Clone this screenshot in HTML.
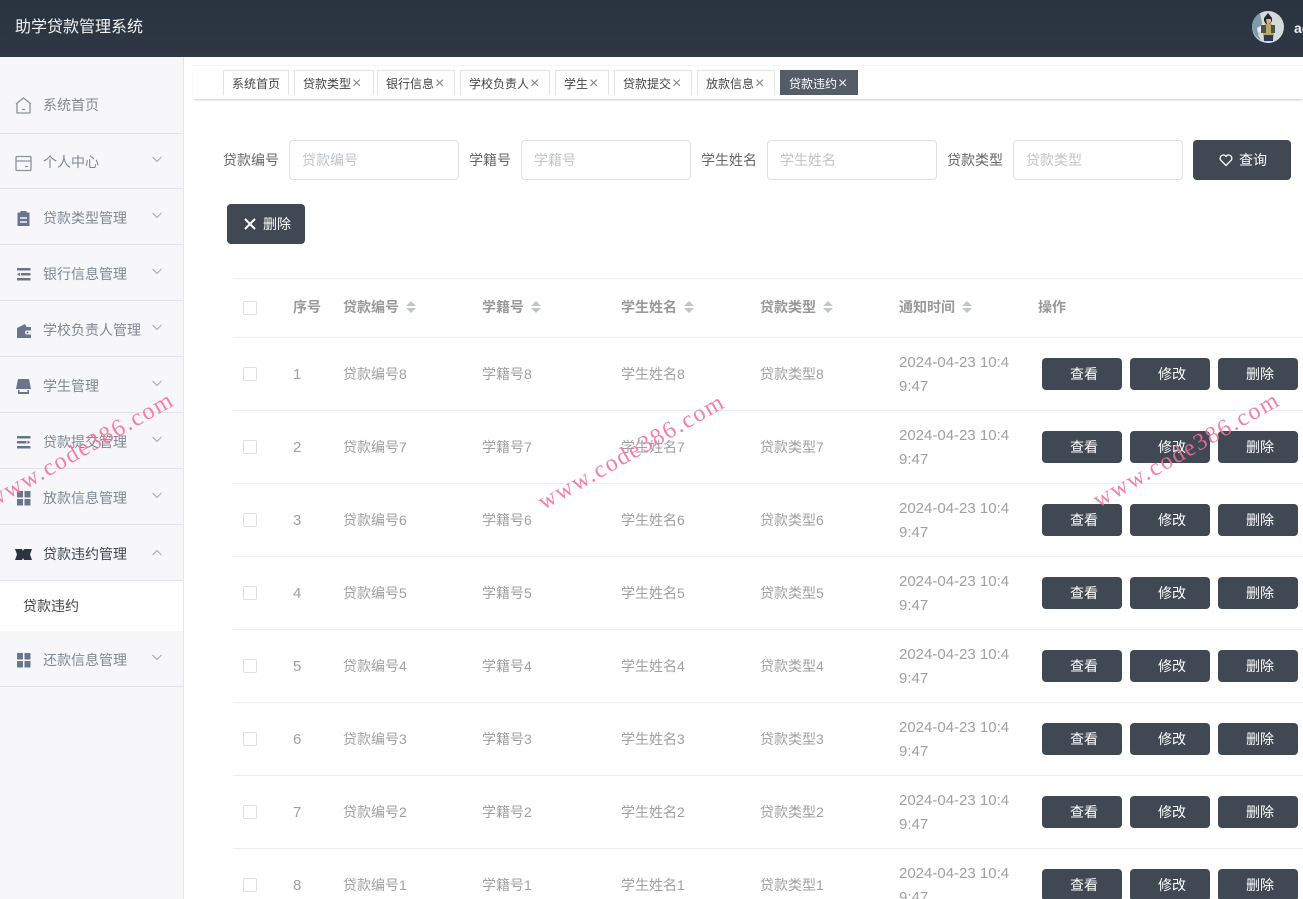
<!DOCTYPE html>
<html lang="zh"><head><meta charset="utf-8"><title>助学贷款管理系统</title>
<style>
html,body{margin:0;padding:0;width:1303px;height:899px;overflow:hidden;background:#fff}
body{position:relative;font-family:"Liberation Sans","Noto Sans CJK SC",sans-serif;font-size:14px;color:#666}
div,span,svg{position:absolute;box-sizing:border-box;white-space:nowrap}
#hd{left:0;top:0;width:1303px;height:57px;background:linear-gradient(180deg,#2a3340,#2e3744)}
#sb{left:0;top:57px;width:184px;height:842px;background:#f7f7f9;border-right:1px solid #e6e6ea}
.m{left:0;width:183px;border-bottom:1px solid #e2e2e6}
.mt{left:43px;line-height:20px;color:#7f8794}
.ic{left:15px;width:17px;height:17px}
.ch{left:152px;width:10px;height:7px}
.tab{top:70px;height:25px;border:1px solid #e3e3e3;border-bottom:none;background:#fff;font-size:12px;line-height:26px;color:#444;padding-left:8px}
.tab i{font-style:normal;color:#888;font-size:16px;line-height:20px;margin-left:1px;font-weight:normal}
.lb{top:150px;line-height:20px;color:#666}
.ip{top:140px;width:170px;height:40px;border:1px solid #dcdfe6;border-radius:4px;padding-left:12px;line-height:38px;color:#c0c4cc;background:#fff}
.btn{background:#3f4853;border-radius:4px;color:#fff;text-align:center}
.hl{left:233px;width:1070px;height:1px;background:#ebeef5}
.r{left:0;width:1303px;height:73px}
.cb{left:243px;width:14px;height:14px;border:1px solid #dcdfe6;border-radius:2px;background:#fff}
.c{line-height:24px;color:#a0a0a0;top:25px}
.n{left:293px;font-size:15px;top:26px}
.d{left:899px;top:14px;font-size:15px}
.th{top:297px;line-height:20px;color:#999;font-weight:bold}
.s{top:301px;width:10px;height:12px}
.b{top:21px;width:80px;height:32px;line-height:32px;background:#3f4853;border-radius:4px;color:#fff;text-align:center;padding-left:4px}
.w{font-family:"Liberation Serif",serif;font-size:24px;letter-spacing:1.7px;color:#f0709a;transform:rotate(-29.5deg);transform-origin:0 50%;line-height:28px;opacity:.88;z-index:9}
</style></head><body>

<div id="hd">
<span style="left:15px;top:17px;line-height:22px;font-size:16px;color:#f2f2f2">助学贷款管理系统</span>
<svg style="left:1252px;top:11px;width:32px;height:32px" viewBox="0 0 32 32">
<circle cx="16" cy="16" r="16" fill="#d5dadb"/><path d="M0 16A16 16 0 0 1 8 2L10 12 6 24 9 29A16 16 0 0 1 0 16Z" fill="#7f9aa8"/>
<path d="M13 13h7l2 11-1 6h-9l-1-6z" fill="#b9a76a"/><path d="M9 14h5v8H9zM19 14h4v8h-4z" fill="#4c5448"/><path d="M12 24h9v6h-9z" fill="#2c3a55"/>
<path d="M12 7l4-5 4 5v3l-2 3h-4l-2-3z" fill="#23262b"/><path d="M14 8h5v3l-2 2h-2z" fill="#d8ad8c"/><path d="M5 17l4-2v5l-3 2z" fill="#eee"/></svg>
<span style="left:1294px;top:17px;line-height:22px;font-size:14px;font-weight:bold;color:#f4f4f4">admin</span>
</div>

<div id="sb"></div>
<div class="m" style="top:57px;height:77px"></div>
<div class="m" style="top:134px;height:55px"></div>
<div class="m" style="top:189px;height:56px"></div>
<div class="m" style="top:245px;height:56px"></div>
<div class="m" style="top:301px;height:56px"></div>
<div class="m" style="top:357px;height:56px"></div>
<div class="m" style="top:413px;height:56px"></div>
<div class="m" style="top:469px;height:56px"></div>
<div class="m" style="top:525px;height:56px"></div>
<div style="left:0;top:581px;width:183px;height:50px;background:#fff"></div>
<div class="m" style="top:631px;height:56px"></div>

<svg class="ic" style="top:97px" viewBox="0 0 17 17" fill="none" stroke="#8b93a1" stroke-width="1.3"><path d="M1 7L8.500 1 16 7M2 6.500V16h13V6.500"/><path d="M7 12.500h3"/></svg>
<span class="mt" style="top:95px">系统首页</span>
<svg class="ic" style="top:155px" viewBox="0 0 17 17" fill="none" stroke="#8b93a1" stroke-width="1.300"><rect x="1" y="1.500" width="15" height="14" rx="1"/><path d="M1 6h15M10 11.500h3"/></svg>
<span class="mt" style="top:152px">个人中心</span>
<svg class="ic" style="top:210px" viewBox="0 0 17 17"><path d="M2.500 2.500h3V1h6v1.500h3V16h-12z" fill="#69758c"/><path d="M5 8h7M5 12h7" stroke="#f6f6f8" stroke-width="1.500"/></svg>
<span class="mt" style="top:208px">贷款类型管理</span>
<svg class="ic" style="top:266px" viewBox="0 0 17 17" fill="#69758c"><path d="M2 2h13.500v2.500H2zM6 7h9.500v2.500H6zM2 12h13.500v2.500H2zM2 8.200L5 6.500V10z"/></svg>
<span class="mt" style="top:264px">银行信息管理</span>
<svg class="ic" style="top:323px" viewBox="0 0 17 17" fill="#69758c"><path d="M2 5l8-4 1.500 3H16v3.500h-4a2 2 0 0 0 0 4h4V15H2z"/><circle cx="12.500" cy="9.500" r="1"/></svg>
<span class="mt" style="top:320px">学校负责人管理</span>
<svg class="ic" style="top:378px" viewBox="0 0 17 17" fill="#69758c"><path d="M3 1h11l2 10H1z"/><path d="M3 12v4h11v-4h-1.500v2h-8v-2z"/></svg>
<span class="mt" style="top:376px">学生管理</span>
<svg class="ic" style="top:434px" viewBox="0 0 17 17" fill="#69758c"><path d="M2 2h13.500v2.500H2zM2 7h9.500v2.500H2zM2 12h13.500v2.500H2zM12.500 6.500l3 1.700-3 1.800z"/></svg>
<span class="mt" style="top:432px">贷款提交管理</span>
<svg class="ic" style="top:490px" viewBox="0 0 17 17" fill="#69758c"><path d="M2 1h6v6.500H2zM9.500 1h6v6.500h-6zM2 9h6v6.500H2zM9.500 9h6v6.500h-6z"/></svg>
<span class="mt" style="top:488px">放款信息管理</span>
<svg class="ic" style="top:546px" viewBox="0 0 17 17" fill="#2b3440"><path d="M0 3h7l1 2 1-2h8l-2 5.500 2 5.500H9l-1-2-1 2H0l2-5.500z"/></svg>
<span class="mt" style="top:544px;color:#3c4450">贷款违约管理</span>
<span style="left:23px;top:596px;line-height:20px;color:#444">贷款违约</span>
<svg class="ic" style="top:652px" viewBox="0 0 17 17" fill="#69758c"><path d="M2 1h6v6.500H2zM9.500 1h6v6.500h-6zM2 9h6v6.500H2zM9.500 9h6v6.500h-6z"/></svg>
<span class="mt" style="top:650px">还款信息管理</span>

<svg class="ch" style="top:156px" viewBox="0 0 10 7" fill="none" stroke="#a3a8b1"><path d="M.5 1L5 5.500 9.500 1"/></svg>
<svg class="ch" style="top:212px" viewBox="0 0 10 7" fill="none" stroke="#a3a8b1"><path d="M.5 1L5 5.500 9.500 1"/></svg>
<svg class="ch" style="top:268px" viewBox="0 0 10 7" fill="none" stroke="#a3a8b1"><path d="M.5 1L5 5.500 9.500 1"/></svg>
<svg class="ch" style="top:324px" viewBox="0 0 10 7" fill="none" stroke="#a3a8b1"><path d="M.5 1L5 5.500 9.500 1"/></svg>
<svg class="ch" style="top:380px" viewBox="0 0 10 7" fill="none" stroke="#a3a8b1"><path d="M.5 1L5 5.500 9.500 1"/></svg>
<svg class="ch" style="top:436px" viewBox="0 0 10 7" fill="none" stroke="#a3a8b1"><path d="M.5 1L5 5.500 9.500 1"/></svg>
<svg class="ch" style="top:492px" viewBox="0 0 10 7" fill="none" stroke="#a3a8b1"><path d="M.5 1L5 5.500 9.500 1"/></svg>
<svg class="ch" style="top:549px" viewBox="0 0 10 7" fill="none" stroke="#a3a8b1"><path d="M.5 6L5 1.500 9.500 6"/></svg>
<svg class="ch" style="top:654px" viewBox="0 0 10 7" fill="none" stroke="#a3a8b1"><path d="M.5 1L5 5.500 9.500 1"/></svg>

<div style="left:193px;top:65px;width:1110px;height:34px;background:#fff;border-top:1px solid #f5f5f7;box-shadow:0 2px 2px -1px rgba(0,0,0,.2)"></div>
<div class="tab" style="left:223px;width:66px">系统首页</div>
<div class="tab" style="left:294px;width:80px">贷款类型<i>×</i></div>
<div class="tab" style="left:377px;width:78px">银行信息<i>×</i></div>
<div class="tab" style="left:460px;width:90px">学校负责人<i>×</i></div>
<div class="tab" style="left:555px;width:54px">学生<i>×</i></div>
<div class="tab" style="left:614px;width:78px">贷款提交<i>×</i></div>
<div class="tab" style="left:697px;width:78px">放款信息<i>×</i></div>
<div class="tab" style="left:780px;width:78px;background:#545c68;border-color:#545c68;color:#fff">贷款违约<i style="color:#eee">×</i></div>

<span class="lb" style="left:223px">贷款编号</span><div class="ip" style="left:289px">贷款编号</div>
<span class="lb" style="left:469px">学籍号</span><div class="ip" style="left:521px">学籍号</div>
<span class="lb" style="left:701px">学生姓名</span><div class="ip" style="left:767px">学生姓名</div>
<span class="lb" style="left:947px">贷款类型</span><div class="ip" style="left:1013px">贷款类型</div>
<div class="btn" style="left:1193px;top:140px;width:98px;height:40px;line-height:40px;padding-left:22px">查询</div>
<svg style="left:1219px;top:153px;width:14px;height:14px" viewBox="0 0 14 14" fill="none" stroke="#fff" stroke-width="1.300"><path d="M7 12.500L1.800 7.200A3.100 3.100 0 0 1 7 3.300 3.100 3.100 0 0 1 12.200 7.200z"/></svg>
<div class="btn" style="left:227px;top:204px;width:78px;height:40px;line-height:40px;padding-left:22px">删除</div>
<svg style="left:244px;top:218px;width:12px;height:12px" viewBox="0 0 12 12" stroke="#fff" stroke-width="2"><path d="M1 1l10 10M11 1L1 11"/></svg>

<div class="hl" style="top:278px"></div>
<div class="cb" style="top:301px"></div>
<span class="th" style="left:293px">序号</span>
<span class="th" style="left:343px">贷款编号</span>
<svg class="s" style="left:406px" viewBox="0 0 10 12" fill="#c0c4cc"><path d="M5 0l5 5H0zM0 7h10l-5 5z"/></svg>
<span class="th" style="left:482px">学籍号</span>
<svg class="s" style="left:531px" viewBox="0 0 10 12" fill="#c0c4cc"><path d="M5 0l5 5H0zM0 7h10l-5 5z"/></svg>
<span class="th" style="left:621px">学生姓名</span>
<svg class="s" style="left:684px" viewBox="0 0 10 12" fill="#c0c4cc"><path d="M5 0l5 5H0zM0 7h10l-5 5z"/></svg>
<span class="th" style="left:760px">贷款类型</span>
<svg class="s" style="left:823px" viewBox="0 0 10 12" fill="#c0c4cc"><path d="M5 0l5 5H0zM0 7h10l-5 5z"/></svg>
<span class="th" style="left:899px">通知时间</span>
<svg class="s" style="left:962px" viewBox="0 0 10 12" fill="#c0c4cc"><path d="M5 0l5 5H0zM0 7h10l-5 5z"/></svg>
<span class="th" style="left:1038px">操作</span>
<div class="hl" style="top:337px"></div>

<div class="r" style="top:337px"><div class="cb" style="top:30px"></div><span class="c n">1</span><span class="c" style="left:343px">贷款编号8</span><span class="c" style="left:482px">学籍号8</span><span class="c" style="left:621px">学生姓名8</span><span class="c" style="left:760px">贷款类型8</span><span class="c d">2024-04-23 10:4<br>9:47</span><span class="b" style="left:1042px">查看</span><span class="b" style="left:1130px">修改</span><span class="b" style="left:1218px">删除</span></div>
<div class="hl" style="top:410px"></div>
<div class="r" style="top:410px"><div class="cb" style="top:30px"></div><span class="c n">2</span><span class="c" style="left:343px">贷款编号7</span><span class="c" style="left:482px">学籍号7</span><span class="c" style="left:621px">学生姓名7</span><span class="c" style="left:760px">贷款类型7</span><span class="c d">2024-04-23 10:4<br>9:47</span><span class="b" style="left:1042px">查看</span><span class="b" style="left:1130px">修改</span><span class="b" style="left:1218px">删除</span></div>
<div class="hl" style="top:483px"></div>
<div class="r" style="top:483px"><div class="cb" style="top:30px"></div><span class="c n">3</span><span class="c" style="left:343px">贷款编号6</span><span class="c" style="left:482px">学籍号6</span><span class="c" style="left:621px">学生姓名6</span><span class="c" style="left:760px">贷款类型6</span><span class="c d">2024-04-23 10:4<br>9:47</span><span class="b" style="left:1042px">查看</span><span class="b" style="left:1130px">修改</span><span class="b" style="left:1218px">删除</span></div>
<div class="hl" style="top:556px"></div>
<div class="r" style="top:556px"><div class="cb" style="top:30px"></div><span class="c n">4</span><span class="c" style="left:343px">贷款编号5</span><span class="c" style="left:482px">学籍号5</span><span class="c" style="left:621px">学生姓名5</span><span class="c" style="left:760px">贷款类型5</span><span class="c d">2024-04-23 10:4<br>9:47</span><span class="b" style="left:1042px">查看</span><span class="b" style="left:1130px">修改</span><span class="b" style="left:1218px">删除</span></div>
<div class="hl" style="top:629px"></div>
<div class="r" style="top:629px"><div class="cb" style="top:30px"></div><span class="c n">5</span><span class="c" style="left:343px">贷款编号4</span><span class="c" style="left:482px">学籍号4</span><span class="c" style="left:621px">学生姓名4</span><span class="c" style="left:760px">贷款类型4</span><span class="c d">2024-04-23 10:4<br>9:47</span><span class="b" style="left:1042px">查看</span><span class="b" style="left:1130px">修改</span><span class="b" style="left:1218px">删除</span></div>
<div class="hl" style="top:702px"></div>
<div class="r" style="top:702px"><div class="cb" style="top:30px"></div><span class="c n">6</span><span class="c" style="left:343px">贷款编号3</span><span class="c" style="left:482px">学籍号3</span><span class="c" style="left:621px">学生姓名3</span><span class="c" style="left:760px">贷款类型3</span><span class="c d">2024-04-23 10:4<br>9:47</span><span class="b" style="left:1042px">查看</span><span class="b" style="left:1130px">修改</span><span class="b" style="left:1218px">删除</span></div>
<div class="hl" style="top:775px"></div>
<div class="r" style="top:775px"><div class="cb" style="top:30px"></div><span class="c n">7</span><span class="c" style="left:343px">贷款编号2</span><span class="c" style="left:482px">学籍号2</span><span class="c" style="left:621px">学生姓名2</span><span class="c" style="left:760px">贷款类型2</span><span class="c d">2024-04-23 10:4<br>9:47</span><span class="b" style="left:1042px">查看</span><span class="b" style="left:1130px">修改</span><span class="b" style="left:1218px">删除</span></div>
<div class="hl" style="top:848px"></div>
<div class="r" style="top:848px"><div class="cb" style="top:30px"></div><span class="c n">8</span><span class="c" style="left:343px">贷款编号1</span><span class="c" style="left:482px">学籍号1</span><span class="c" style="left:621px">学生姓名1</span><span class="c" style="left:760px">贷款类型1</span><span class="c d">2024-04-23 10:4<br>9:47</span><span class="b" style="left:1042px">查看</span><span class="b" style="left:1130px">修改</span><span class="b" style="left:1218px">删除</span></div>

<span class="w" style="left:-11px;top:488px">www.code386.com</span>
<span class="w" style="left:540px;top:490px">www.code386.com</span>
<span class="w" style="left:1095px;top:488px">www.code386.com</span>
</body></html>
